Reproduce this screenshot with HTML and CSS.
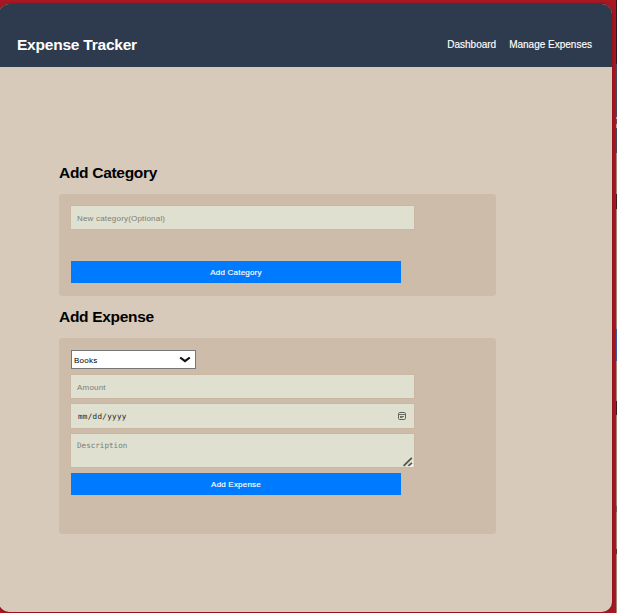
FILE: index.html
```
<!DOCTYPE html>
<html lang="en">
<head>
<meta charset="utf-8">
<title>Expense Tracker</title>
<link rel="stylesheet" href="styles.css">
</head>
<body>
<div class="window">
  <header class="topbar">
    <h1 class="brand">Expense Tracker</h1>
    <nav class="nav"><a>Dashboard</a><a>Manage Expenses</a></nav>
  </header>
  <main class="content">
    <h2 class="heading">Add Category</h2>
    <form class="panel panel-category">
      <input class="field" type="text" placeholder="New category(Optional)">
      <button class="submit" type="button">Add Category</button>
    </form>
    <h2 class="heading">Add Expense</h2>
    <form class="panel panel-expense">
      <div class="select"><span>Books</span>
        <svg width="12" height="8" viewBox="0 0 12 8"><path d="M1.2 1.5 L6 5.2 L10.8 1.5" fill="none" stroke="#101010" stroke-width="2.2"/></svg>
      </div>
      <input class="field" type="text" placeholder="Amount">
      <div class="field date"><span class="date-text">mm/dd/yyyy</span>
        <svg width="8" height="8" viewBox="0 0 8 8"><rect x=".5" y=".5" width="7" height="7" rx="1.2" fill="none" stroke="#62635a"/><path d="M1 2.5H7M2 4.5H6M2 5.5H4.5" stroke="#62635a" stroke-width=".9"/></svg>
      </div>
      <div class="field notes"><span class="notes-text">Description</span>
        <svg width="10" height="10" viewBox="0 0 10 10"><path d="M4 10H10V4Z" fill="#f4f4ee"/><path d="M.6 8.8 L8.8 .8M5.4 8.8 L9 5.8" fill="none" stroke="#50514a" stroke-width="1.7"/></svg>
      </div>
      <button class="submit" type="button">Add Expense</button>
    </form>
  </main>
</div>
<aside class="edge"></aside>
</body>
</html>
```
FILE: styles.css
```
* { box-sizing: border-box; }
body {
  margin: 0;
  width: 617px;
  height: 613px;
  overflow: hidden;
  display: flex;
  background: #a81822;
  font-family: "Liberation Sans", Arial, sans-serif;
}
.window {
  flex: none;
  width: 613px;
  height: 608px;
  margin: 4px 3px 0 -1px;
  border-radius: 10px;
  overflow: hidden;
  background: #d8caba;
  box-shadow: 0 0 3px rgba(60, 0, 0, .5);
}
.topbar {
  height: 63px;
  padding: 18px 20px 0 18px;
  display: flex;
  align-items: center;
  justify-content: space-between;
  background: #2e3b4e;
  color: #fff;
}
.brand { margin: 0; font-size: 15.5px; line-height: 18px; letter-spacing: -.22px; }
.nav { display: flex; gap: 13px; font-size: 10px; line-height: 12px; -webkit-text-stroke: .15px #fff; }
.content { padding: 96px 0 0 60px; }
.heading {
  margin: 0;
  height: 31px;
  font-size: 15.5px;
  line-height: 20px;
  letter-spacing: -.3px;
  color: #000;
}
.panel {
  width: 437px;
  padding: 12px;
  border-radius: 3px;
  background: #cebcaa;
  display: flex;
  flex-direction: column;
  align-items: flex-start;
}
.panel-category { height: 102px; gap: 32px; margin-bottom: 11px; }
.panel-expense { height: 196px; gap: 6px; }
.field {
  width: 343px;
  height: 23px;
  margin: 0;
  padding: 1px 6px 0;
  border: 0;
  border-radius: 0;
  background: #e0e0d0;
  box-shadow: 0 0 0 1px #cab8a5;
  color: #222;
  font: 8px "Liberation Sans", Arial, sans-serif;
  letter-spacing: .19px;
}
.field::placeholder { color: #7c7d76; opacity: 1; }
.select {
  width: 125px;
  height: 19px;
  padding: 1px 4px 0 2px;
  border: 1px solid #767676;
  background: #fff;
  display: flex;
  align-items: center;
  justify-content: space-between;
  color: #000;
  font-size: 8px;
  letter-spacing: .25px;
}
.select svg { margin-bottom: 1px; }
.date {
  height: 24px;
  padding: 0 8px 0 7px;
  display: flex;
  align-items: center;
  justify-content: space-between;
}
.date-text { font: 7.6px "DejaVu Sans Mono", monospace; letter-spacing: .3px; }
.notes {
  height: 33px;
  padding: 7px 1px 0 6px;
  display: flex;
  justify-content: space-between;
}
.notes svg { align-self: flex-end; }
.notes-text { color: #7c7d76; font: 7.6px "DejaVu Sans Mono", monospace; letter-spacing: 0; }
.submit {
  width: 330px;
  height: 22px;
  padding: 0;
  border: 0;
  background: #007bff;
  color: #fff;
  font: 8px "Liberation Sans", Arial, sans-serif;
  letter-spacing: .2px;
  -webkit-text-stroke: .15px #fff;
}
.edge {
  flex: none;
  width: 1px;
  height: 613px;
  margin-left: 1px;
  background: linear-gradient(#2b1c20 0 64px, #42465b 64px 117px, #c8a0a4 117px 119px, #644952 119px 124px, #c8a0a4 124px 128px, #42465b 128px 153px, #a08680 153px 194px, #3b1d20 194px 209px, #a08680 209px 329px, #3b5d9e 329px 361px, #a08680 361px 401px, #3b1d20 401px 415px, #a08680 415px 506px, #765a59 506px 512px, #a08680 512px 549px, #60302c 549px 554px, #a08680 554px);
}
```
